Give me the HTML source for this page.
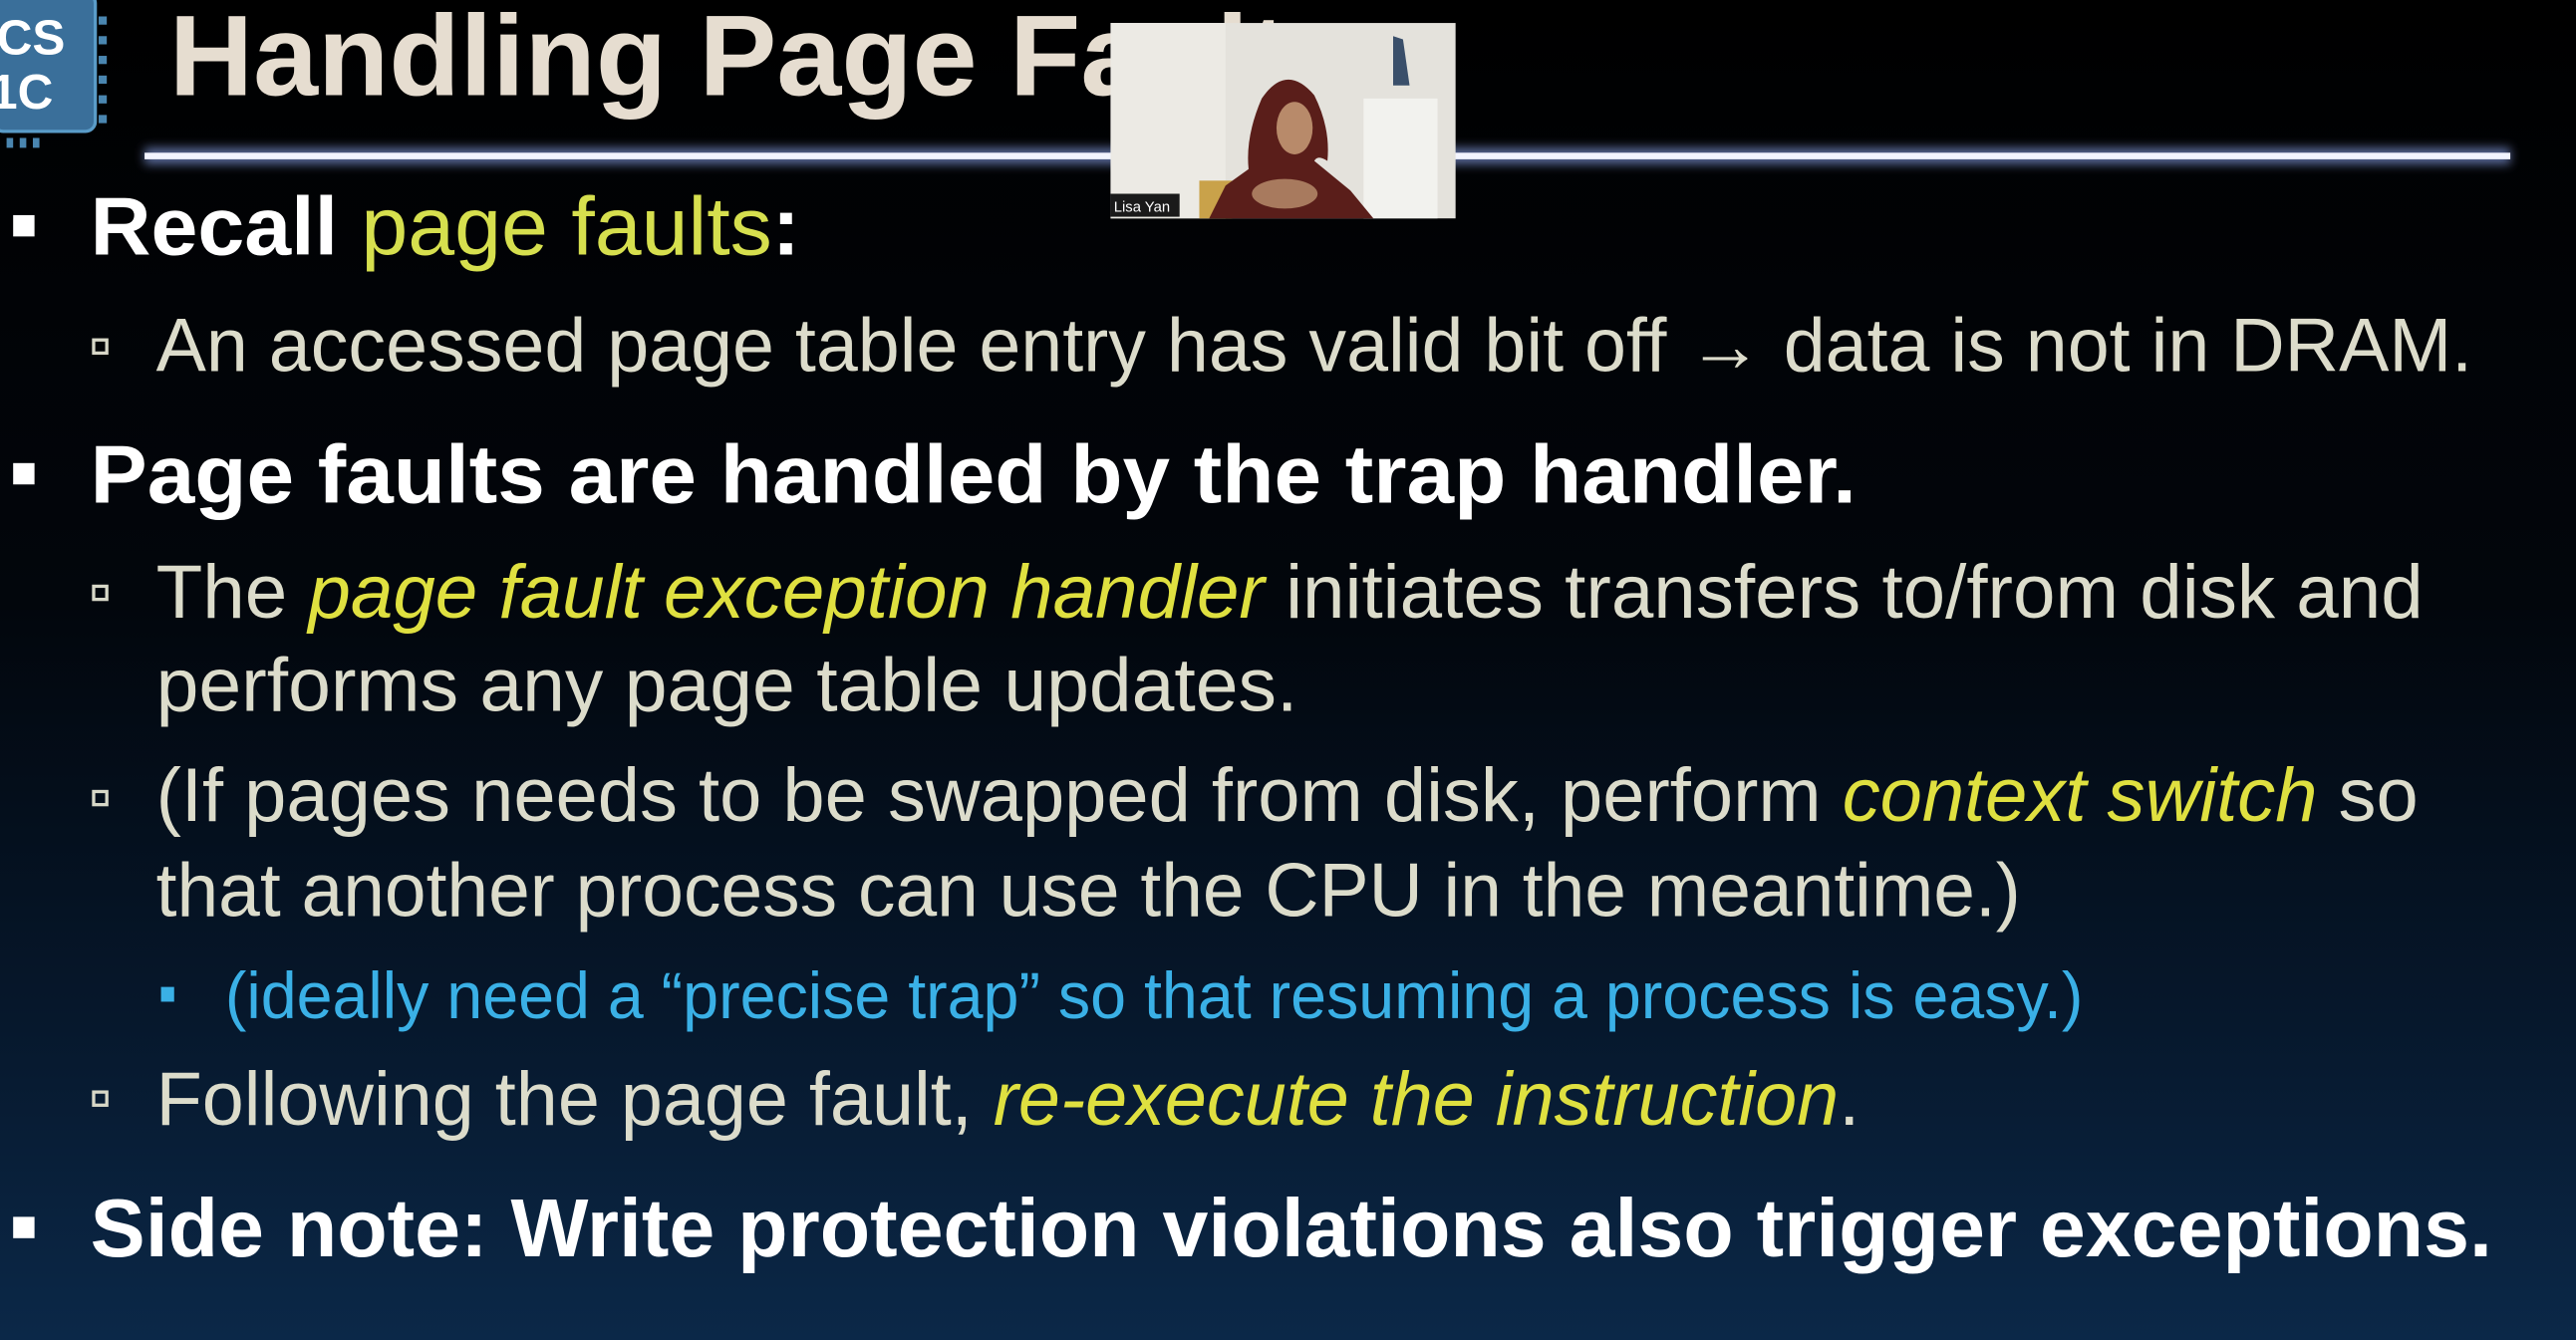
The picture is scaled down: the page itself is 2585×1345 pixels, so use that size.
<!DOCTYPE html>
<html><head><meta charset="utf-8"><style>
html,body{margin:0;padding:0;width:2585px;height:1345px;overflow:hidden;background:#000}
svg{display:block}
text{font-family:"Liberation Sans",sans-serif}
</style></head><body>
<svg width="2585" height="1345" viewBox="0 0 1568 816" preserveAspectRatio="none">
<defs>
<linearGradient id="bg" x1="0" y1="0" x2="0" y2="1">
<stop offset="0" stop-color="#000"/><stop offset="0.45" stop-color="#02060c"/><stop offset="0.75" stop-color="#06172b"/><stop offset="1" stop-color="#0b2848"/>
</linearGradient>
<filter id="gl" x="-5%" y="-300%" width="110%" height="700%"><feGaussianBlur stdDeviation="3"/></filter>
</defs>
<rect width="1568" height="816" fill="url(#bg)"/>
<!-- logo -->
<rect x="-4" y="-4" width="62" height="84" rx="6" fill="#3a6f9a" stroke="#5a9cc8" stroke-width="2"/>
<text x="-2" y="33" font-size="30" font-weight="bold" fill="#fff">CS</text>
<text x="-6" y="66" font-size="30" font-weight="bold" fill="#fff">1C</text>
<g fill="#4a86b0"><rect x="60" y="10" width="5" height="5"/><rect x="60" y="22" width="5" height="5"/><rect x="60" y="34" width="5" height="5"/><rect x="60" y="46" width="5" height="5"/><rect x="60" y="58" width="5" height="5"/><rect x="60" y="70" width="5" height="5"/><rect x="4" y="84" width="4" height="6"/><rect x="12" y="84" width="4" height="6"/><rect x="20" y="84" width="4" height="6"/></g>
<!-- title -->
<text x="103" y="58" font-size="70" font-weight="bold" fill="#e6ddd0" textLength="720" lengthAdjust="spacingAndGlyphs">Handling Page Faults</text>
<!-- rule -->
<rect x="88" y="90" width="1440" height="10" fill="#5a6a9a" filter="url(#gl)"/>
<rect x="88" y="93" width="1440" height="4" fill="#f2f4ff"/>
<!-- bullets -->
<g fill="#fff"><rect x="8" y="131" width="13" height="13"/><rect x="8" y="282" width="13" height="13"/><rect x="8" y="741" width="13" height="13"/></g>
<g fill="none" stroke="#d8d8c8" stroke-width="2"><rect x="57" y="207" width="8" height="8"/><rect x="57" y="357" width="8" height="8"/><rect x="57" y="482" width="8" height="8"/><rect x="57" y="665" width="8" height="8"/></g>
<rect x="98" y="601" width="8" height="9" fill="#3ab0e6"/>
<text x="55" y="155" font-size="50" font-weight="bold" fill="#fff" textLength="432" lengthAdjust="spacingAndGlyphs">Recall <tspan fill="#d6df4e" font-weight="normal">page faults</tspan>:</text>
<text x="95" y="226" font-size="46" fill="#dcdccb" textLength="1410" lengthAdjust="spacingAndGlyphs">An accessed page table entry has valid bit off → data is not in DRAM.</text>
<text x="55" y="306" font-size="50" font-weight="bold" fill="#fff" textLength="1075" lengthAdjust="spacingAndGlyphs">Page faults are handled by the trap handler.</text>
<text x="95" y="376" font-size="46" fill="#dcdccb" textLength="1380" lengthAdjust="spacingAndGlyphs">The <tspan fill="#dfe040" font-style="italic">page fault exception handler</tspan> initiates transfers to/from disk and</text>
<text x="95" y="433" font-size="46" fill="#dcdccb" textLength="695" lengthAdjust="spacingAndGlyphs">performs any page table updates.</text>
<text x="95" y="500" font-size="46" fill="#dcdccb" textLength="1377" lengthAdjust="spacingAndGlyphs">(If pages needs to be swapped from disk, perform <tspan fill="#dfe040" font-style="italic">context switch</tspan> so</text>
<text x="95" y="558" font-size="46" fill="#dcdccb" textLength="1135" lengthAdjust="spacingAndGlyphs">that another process can use the CPU in the meantime.)</text>
<text x="137" y="620" font-size="40" fill="#3ab0e6" textLength="1131" lengthAdjust="spacingAndGlyphs">(ideally need a “precise trap” so that resuming a process is easy.)</text>
<text x="95" y="685" font-size="46" fill="#dcdccb" textLength="1037" lengthAdjust="spacingAndGlyphs">Following the page fault, <tspan fill="#dfe040" font-style="italic">re-execute the instruction</tspan>.</text>
<text x="55" y="765" font-size="50" font-weight="bold" fill="#fff" textLength="1462" lengthAdjust="spacingAndGlyphs">Side note: Write protection violations also trigger exceptions.</text>
<!-- video -->
<rect x="676" y="14" width="210" height="119" fill="#e4e2dc"/>
<rect x="676" y="14" width="70" height="119" fill="#eceae4"/>
<rect x="830" y="60" width="45" height="73" fill="#f2f2ee"/>
<path d="M848 22 l6 2 l4 28 l-10 0 z" fill="#3a4f6a"/>
<rect x="730" y="110" width="20" height="23" fill="#c9a24a"/>
<path d="M768 60 q15 -22 32 -2 q10 20 8 40 q-6 -4 -8 0 l22 18 l14 17 l-100 0 l10 -20 l14 -10 q-2 -20 8 -43z" fill="#5a1e1a"/>
<ellipse cx="788" cy="78" rx="11" ry="16" fill="#b88a6a"/>
<ellipse cx="782" cy="118" rx="20" ry="9" fill="#a87a5e"/>
<rect x="676" y="118" width="42" height="14" fill="#1a1a1a"/>
<text x="678" y="129" font-size="9" fill="#fff">Lisa Yan</text>
</svg>
</body></html>
